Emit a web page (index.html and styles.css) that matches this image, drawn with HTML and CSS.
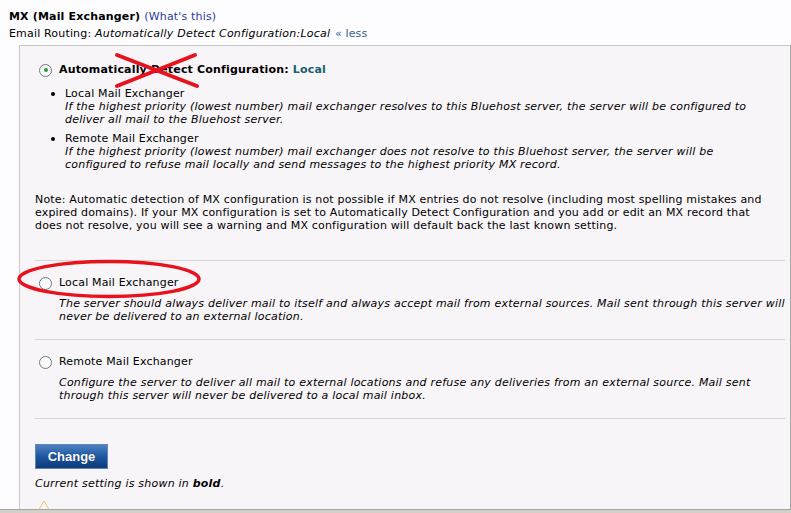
FILE: index.html
```html
<!DOCTYPE html>
<html lang="en">
<head>
    <meta charset="UTF-8">
    <title>MX (Mail Exchanger)</title>
    <link rel="stylesheet" href="styles.css">
</head>
<body>
    <div class="page">
        <div class="mx-title">MX (Mail Exchanger) <a href="#" class="help-link">(What's this)</a></div>
        <div class="routing">Email Routing: <em>Automatically Detect Configuration:Local</em> <a href="#" class="less-link">&laquo; less</a></div>

        <div class="mx-panel">
            <div class="option-row current">
                <span class="radio checked"></span>
                <span>Automatically Detect Configuration: <span class="local">Local</span></span>
            </div>
            <ul class="auto-list">
                <li>Local Mail Exchanger<br>
                    <em>If the highest priority (lowest number) mail exchanger resolves to this Bluehost server, the server will be configured to<br>deliver all mail to the Bluehost server.</em>
                </li>
                <li>Remote Mail Exchanger<br>
                    <em>If the highest priority (lowest number) mail exchanger does not resolve to this Bluehost server, the server will be<br>configured to refuse mail locally and send messages to the highest priority MX record.</em>
                </li>
            </ul>
            <p class="note">Note: Automatic detection of MX configuration is not possible if MX entries do not resolve (including most spelling mistakes and<br>expired domains). If your MX configuration is set to Automatically Detect Configuration and you add or edit an MX record that<br>does not resolve, you will see a warning and MX configuration will default back the last known setting.</p>

            <div class="option-block">
                <div class="option-row">
                    <span class="radio"></span>
                    <span>Local Mail Exchanger</span>
                </div>
                <p class="option-desc"><em>The server should always deliver mail to itself and always accept mail from external sources. Mail sent through this server will<br>never be delivered to an external location.</em></p>
            </div>

            <div class="option-block">
                <div class="option-row">
                    <span class="radio"></span>
                    <span>Remote Mail Exchanger</span>
                </div>
                <p class="option-desc"><em>Configure the server to deliver all mail to external locations and refuse any deliveries from an external source. Mail sent<br>through this server will never be delivered to a local mail inbox.</em></p>
            </div>

            <div class="actions">
                <button class="change-button">Change</button>
                <div class="hint"><em>Current setting is shown in <b>bold</b>.</em></div>
                <div class="warn-icon">
                    <svg width="12" height="10" viewBox="0 0 12 10"><path d="M6 1 L11 9.5 L1 9.5 Z" fill="none" stroke="#e6c86a" stroke-width="1"/></svg>
                </div>
            </div>
        </div>
    </div>

    <svg class="markup" width="791" height="513" viewBox="0 0 791 513">
        <line x1="117" y1="55" x2="197" y2="86" stroke="#e8121c" stroke-width="4" stroke-linecap="round"/>
        <line x1="195" y1="55" x2="117" y2="86" stroke="#e8121c" stroke-width="4" stroke-linecap="round"/>
        <ellipse cx="109" cy="279" rx="90" ry="17.5" fill="none" stroke="#e8121c" stroke-width="3.5"/>
    </svg>

    <div class="status-bar"></div>
</body>
</html>
```

FILE: styles.css
```css
body {
    margin: 0;
    background-color: #fdfcfe;
    font-family: "DejaVu Sans", Verdana, sans-serif;
    font-size: 11px;
    letter-spacing: 0.17px;
    color: #000;
    height: 513px;
    overflow: hidden;
    display: flex;
    flex-direction: column;
}

em {
    letter-spacing: 0.22px;
}

a {
    text-decoration: none;
}

.page {
    flex: 1;
    display: flex;
    flex-direction: column;
    padding: 10px 0 0 9px;
}

.mx-title {
    font-weight: bold;
    line-height: 14px;
}

.help-link {
    font-weight: normal;
    color: #2b3b94;
}

.routing {
    margin-top: 3px;
    line-height: 14px;
}

.less-link {
    color: #33668f;
    margin-left: 1px;
}

.mx-panel {
    flex: 1;
    margin: 4px 0 0 10px;
    background-color: #f8f5f8;
    border-top: 1px solid #c9c9c9;
    border-left: 1px solid #c9c9c9;
    border-right: 1px solid #a9a9a9;
    padding: 0 5px 0 15px;
}

.option-row {
    display: flex;
    align-items: center;
    line-height: 14px;
}

.option-row.current {
    padding-top: 17px;
    font-weight: bold;
}

.local {
    color: #1b5f6c;
}

.radio {
    width: 11px;
    height: 11px;
    border: 1px solid #6b7889;
    border-radius: 50%;
    background-color: #fcfcfc;
    margin: 0 7px 0 4px;
    box-sizing: content-box;
    display: flex;
    align-items: center;
    justify-content: center;
}

.radio.checked::after {
    content: "";
    width: 4px;
    height: 4px;
    border-radius: 50%;
    background-color: #2d9a3c;
}

.auto-list {
    list-style: none;
    margin: 10px 0 0 0;
    padding: 0 0 0 30px;
    line-height: 13px;
}

.auto-list li {
    position: relative;
    margin-bottom: 6px;
}

.auto-list li::before {
    content: "";
    position: absolute;
    left: -14px;
    top: 5px;
    width: 4px;
    height: 4px;
    border-radius: 50%;
    background-color: #000;
}

.note {
    margin: 22px 0 0 0;
    line-height: 13px;
    padding-bottom: 28px;
    border-bottom: 1px solid #d6d6d6;
}

.option-block {
    padding-top: 15px;
    padding-bottom: 16px;
    border-bottom: 1px solid #d6d6d6;
}

.option-desc {
    margin: 7px 0 0 24px;
    line-height: 13px;
}

.actions {
    padding-top: 25px;
}

.change-button {
    width: 73px;
    height: 25px;
    padding: 0;
    border: 1px solid #5f86b6;
    background: linear-gradient(#4c82c3, #1d57a0 50%, #0c3b78);
    color: #fff;
    font-family: "Liberation Sans", Arial, sans-serif;
    font-size: 13px;
    font-weight: bold;
    letter-spacing: 0;
    text-shadow: 0 0 1px #0a2a55;
    cursor: pointer;
}

.hint {
    margin-top: 8px;
    line-height: 13px;
}

.warn-icon {
    margin: 10px 0 0 3px;
    height: 10px;
}

.markup {
    position: absolute;
    top: 0;
    left: 0;
    pointer-events: none;
}

.status-bar {
    position: fixed;
    left: 0;
    right: 0;
    bottom: 0;
    height: 3px;
    background-color: #d4d0c8;
    border-top: 1px solid #a6a39c;
}
```
